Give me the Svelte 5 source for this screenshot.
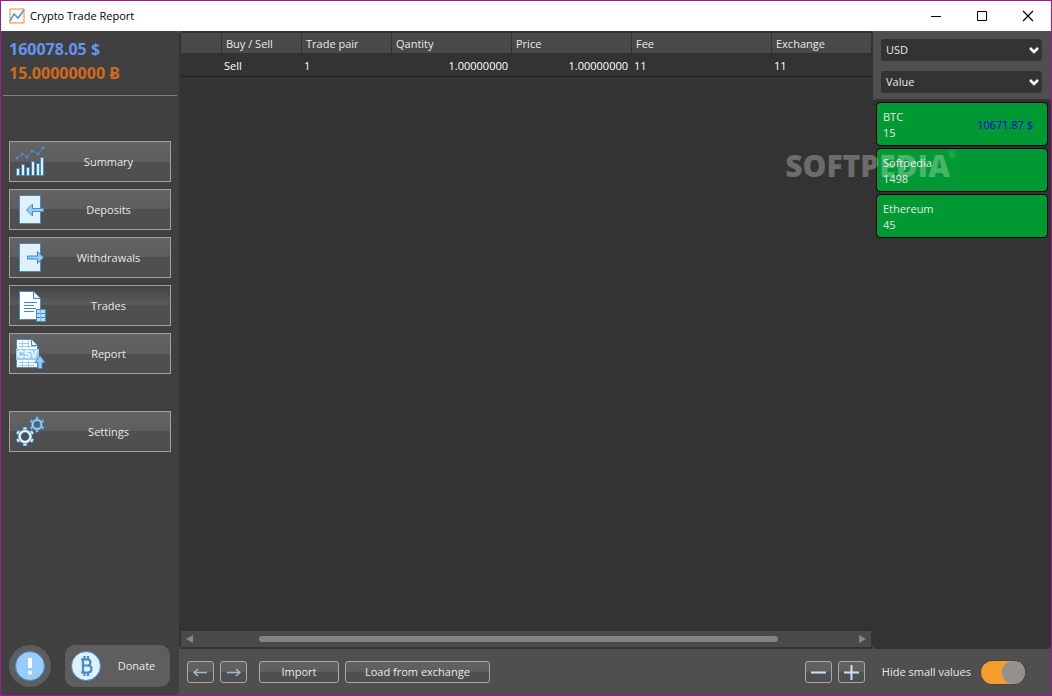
<script>
	let active = 'Trades'
	let currency = 'USD'
	let sort = 'Value'
	let hideSmall = true

	const nav = ['Summary', 'Deposits', 'Withdrawals', 'Trades', 'Report', 'Settings']

	const columns = [
		{ name: '', width: 41 },
		{ name: 'Buy / Sell', width: 80 },
		{ name: 'Trade pair', width: 90 },
		{ name: 'Qantity', width: 120, number: true },
		{ name: 'Price', width: 120, number: true },
		{ name: 'Fee', width: 140 },
		{ name: 'Exchange' }
	]

	const trades = [
		['', 'Sell', '1', '1.00000000', '1.00000000', '11', '11']
	]

	const assets = [
		{ name: 'BTC', amount: '15', value: '10671.87 $' },
		{ name: 'Softpedia', amount: '1498' },
		{ name: 'Ethereum', amount: '45' }
	]

	// horizontal scroll position, in percent of the track
	const scroll = { start: 9.3, size: 79.1 }

	const teeth = [0, 60, 120, 180, 240, 300]
</script>

<div class="window">
	<header class="titlebar">
		<svg class="logo" width="16" height="16" viewBox="0 0 16 16" fill="none">
			<rect x="1" y="1" width="14" height="14" fill="#fff7f0" stroke="#f08a48" />
			<path d="M1 13 5 6 9 10 15 2" stroke="#3c9bd6" stroke-width="1.5" />
		</svg>
		<h1>Crypto Trade Report</h1>
		<button type="button" aria-label="Minimize">
			<svg width="12" height="12" viewBox="0 0 12 12"><path d="M1 6.5h10" stroke="#000" /></svg>
		</button>
		<button type="button" aria-label="Maximize">
			<svg width="12" height="12" viewBox="0 0 12 12"><path d="M1.500 1.500h9v9h-9z" fill="none" stroke="#000" /></svg>
		</button>
		<button type="button" aria-label="Close">
			<svg width="12" height="12" viewBox="0 0 12 12"><path d="m1 1 10 10M11 1 1 11" stroke="#000" stroke-width="1.200" /></svg>
		</button>
	</header>

	<div class="body">
		<aside class="sidebar">
			<div class="totals">
				<p class="usd">160078.05 $</p>
				<p class="btc">15.00000000 Ƀ</p>
			</div>

			<nav>
				{#each nav as item}
					<button
						type="button"
						class:active={active === item}
						class:apart={item === 'Settings'}
						on:click={() => active = item}
					>
						<svg width="32" height="32" viewBox="0 0 32 32" fill="none" stroke="#4788c7">
							{#if item === 'Summary'}
								<path d="M2 12 7 8l5 3 5-6 6 3 5-6" />
								<g fill="#8bb7f0">
									<circle cx="2" cy="12" r="1" /><circle cx="7" cy="8" r="1" />
									<circle cx="12" cy="11" r="1" /><circle cx="17" cy="5" r="1" />
									<circle cx="23" cy="8" r="1" /><circle cx="28" cy="2" r="1" />
								</g>
								<path fill="#dff0fe" d="M1.500 22.500h3v7h-3zM6.500 18.500h3v11h-3zM11.500 21.500h3v8h-3zM16.500 15.500h3v14h-3zM21.500 17.500h3v12h-3zM25.500 11.500h3v18h-3z" />
							{:else if item === 'Deposits'}
								<path fill="#dff0fe" d="M4.500 1.500h21v28h-21z" />
								<path fill="#98ccfd" d="m11.500 16 6-6v4.500h11v3h-11v4.500z" />
							{:else if item === 'Withdrawals'}
								<path fill="#dff0fe" d="M4.500 1.500h21v28h-21z" />
								<path fill="#98ccfd" d="m28.500 15.500-6-6v4.500h-10v3h10v4.500z" />
							{:else if item === 'Trades'}
								<path fill="#fff" d="M4.500 1.500h14l7 7v21h-21z" />
								<path fill="#dff0fe" d="M18.500 1.500v7h7" />
								<path d="M9 12.500h13M9 15.500h10M9 18.500h12M9 21.500h10" />
								<path fill="#b6dcfe" stroke="#4788c7" d="M21.500 19.500h9v12h-9zM21.500 23.500h9M21.500 27.500h9" />
								<path stroke="#7fb5e8" d="M25.500 20v11" />
							{:else if item === 'Report'}
								<path fill="#fff" d="M1.500 1.500h15l6 6v22h-21z" />
								<path fill="#dff0fe" d="M16.500 1.500v6h6" />
								<path stroke="#98ccfd" d="M4 5.500h10M4 8.500h17M4 24.500h17M4 27.500h15M7.500 3v7M13.500 3v7M7.500 23v6M13.500 23v6" />
								<path fill="#98ccfd" stroke="none" d="M1 11h23v11H1z" />
								<text x="12" y="20" text-anchor="middle" class="csv">CSV</text>
								<path fill="#98ccfd" d="m25 17.500 5 7h-3v6h-4v-6h-3z" />
							{:else}
								<g transform="translate(10 20.500)" stroke="#e6f4ff">
									{#each teeth as angle}
										<path stroke-width="4.500" d="M0-5v-4.500" transform="rotate({angle})" stroke="#4788c7" />
										<path stroke-width="3" d="M0-5v-4" transform="rotate({angle})" />
									{/each}
									<circle r="5.500" stroke="#4788c7" stroke-width="3.500" />
									<circle r="5.500" stroke-width="2.200" />
								</g>
								<g transform="translate(22 8.500)" stroke="#a9d6ff">
									{#each teeth as angle}
										<path stroke-width="3.500" d="M0-4v-4" transform="rotate({angle})" stroke="#4788c7" />
										<path stroke-width="2" d="M0-4v-3" transform="rotate({angle})" />
									{/each}
									<circle r="4.500" stroke="#4788c7" stroke-width="3" />
									<circle r="4.500" stroke-width="1.500" />
								</g>
							{/if}
						</svg>
						<span>{item}</span>
					</button>
				{/each}
			</nav>

			<div class="support">
				<button type="button" class="about" aria-label="About">
					<svg width="30" height="30" viewBox="0 0 30 30">
						<circle cx="15" cy="15" r="14.500" fill="#98ccfd" stroke="#4788c7" />
						<path d="M13 7h4v10h-4z" fill="#fff" />
						<circle cx="15" cy="21.500" r="2" fill="#fff" />
					</svg>
				</button>
				<button type="button" class="donate">
					<svg width="30" height="30" viewBox="0 0 30 30" fill="none" stroke="#4788c7">
						<circle cx="15" cy="15" r="14.500" fill="#dff0fe" />
						<path stroke-width="2.200" d="M10 8.500h6.500q3 0 3 3t-3 3h-4.500 5q3.500 0 3.500 3.500t-3.500 3.500h-7M12 8.500v13M13.500 5v3M17 5v3M13.500 22v3M17 22v3" />
					</svg>
					<span>Donate</span>
				</button>
			</div>
		</aside>

		<div class="workspace">
			<div class="panels">
				<main>
					<table>
						<colgroup>
							{#each columns as column}
								<col style:width={column.width ? column.width + 'px' : 'auto'} />
							{/each}
						</colgroup>
						<thead>
							<tr>
								{#each columns as column}
									<th>{column.name}</th>
								{/each}
							</tr>
						</thead>
						<tbody>
							{#each trades as trade}
								<tr>
									{#each trade as value, i}
										<td class:number={columns[i].number}>{value}</td>
									{/each}
								</tr>
							{/each}
						</tbody>
					</table>

					<div class="scrollbar">
						<button type="button" aria-label="Scroll left">
							<svg width="7" height="8" viewBox="0 0 7 8"><path d="M7 0v8L0 4z" fill="#858585" /></svg>
						</button>
						<div class="track">
							<div class="thumb" style="margin-left: {scroll.start}%; width: {scroll.size}%"></div>
						</div>
						<button type="button" aria-label="Scroll right">
							<svg width="7" height="8" viewBox="0 0 7 8"><path d="M0 0v8l7-4z" fill="#858585" /></svg>
						</button>
					</div>
				</main>

				<aside class="portfolio">
					<div class="filters">
						<div class="select">
							<select aria-label="Currency" bind:value={currency}>
								<option>USD</option>
								<option>EUR</option>
							</select>
							<svg width="10" height="7" viewBox="0 0 10 7" fill="none"><path d="m1 1 4 4 4-4" stroke="#fff" stroke-width="2.500" /></svg>
						</div>
						<div class="select">
							<select aria-label="Sort by" bind:value={sort}>
								<option>Value</option>
								<option>Name</option>
							</select>
							<svg width="10" height="7" viewBox="0 0 10 7" fill="none"><path d="m1 1 4 4 4-4" stroke="#fff" stroke-width="2.500" /></svg>
						</div>
					</div>
					<ul>
						{#each assets as asset}
							<li>
								<div>
									<p>{asset.name}</p>
									<p>{asset.amount}</p>
								</div>
								{#if asset.value}
									<span class="value">{asset.value}</span>
								{/if}
							</li>
						{/each}
					</ul>
				</aside>
				<div class="watermark" aria-hidden="true">SOFTPEDIA<sup>®</sup></div>
			</div>

			<footer>
				<div class="group">
					<button type="button" class="square" aria-label="Undo">
						<svg width="15" height="9" viewBox="0 0 15 9" fill="none" stroke="#9fb8cc"><path stroke-width="1.500" d="M1 4.500h13M5 1 1 4.500 5 8" /></svg>
					</button>
					<button type="button" class="square" aria-label="Redo">
						<svg width="15" height="9" viewBox="0 0 15 9" fill="none" stroke="#9fb8cc"><path stroke-width="1.500" d="M1 4.500h13M10 1l4 3.500L10 8" /></svg>
					</button>
				</div>
				<div class="group grow">
					<button type="button">Import</button>
					<button type="button">Load from exchange</button>
				</div>
				<div class="group">
					<button type="button" class="square" aria-label="Remove">
						<svg width="15" height="15" viewBox="0 0 15 15"><path d="M0 7.500h15" stroke="#c6e3fb" stroke-width="2" /></svg>
					</button>
					<button type="button" class="square" aria-label="Add">
						<svg width="15" height="15" viewBox="0 0 15 15"><path d="M0 7.500h15M7.500 0v15" stroke="#c6e3fb" stroke-width="2" /></svg>
					</button>
				</div>
				<label class="toggle">
					Hide small values
					<input type="checkbox" bind:checked={hideSmall} />
				</label>
			</footer>
		</div>
	</div>
</div>

<style>
	:global(body) {
		background: #4f4f4f;
	}

	.window {
		display: flex;
		flex-direction: column;
		box-sizing: border-box;
		min-height: 100vh;
		border: 1px solid #9b1a8f;
		font: 11px/16px "Open Sans", "Noto Sans", sans-serif;
		color: #e8e8e8;
	}

	p, h1, ul {
		margin: 0;
		padding: 0;
	}

	button {
		display: flex;
		align-items: center;
		justify-content: center;
		box-sizing: border-box;
		margin: 0;
		padding: 0;
		border: none;
		background: none;
		color: inherit;
		font: inherit;
	}

	svg {
		display: block;
		flex: none;
	}

	.titlebar {
		display: flex;
		align-items: center;
		height: 30px;
		padding-left: 8px;
		background: #fff;
		color: #000;
	}
	.titlebar h1 {
		flex: 1;
		margin-left: 5px;
		font-size: 11px;
		font-weight: 400;
	}
	.titlebar button {
		width: 46px;
		height: 30px;
	}

	.body {
		display: flex;
		flex: 1;
	}

	.sidebar {
		display: flex;
		flex-direction: column;
		box-sizing: border-box;
		width: 178px;
		padding-bottom: 8px;
		border-radius: 4px;
		background: #404040;
	}

	.totals {
		margin: 0 2px;
		padding: 6px 6px 10px;
		border-bottom: 1px solid #7f7f7f;
		font-size: 16px;
		font-weight: 700;
		line-height: 24px;
	}
	.usd {
		color: #6495ed;
	}
	.btc {
		color: #d2691e;
	}

	nav {
		display: flex;
		flex-direction: column;
		gap: 7px;
		padding: 45px 8px 0;
	}
	nav button {
		height: 41px;
		padding-left: 5px;
		border: 1px solid #a0a0a0;
		background: linear-gradient(#636363, #5e5e5e 50%, #505050 50%, #4e4e4e);
	}
	nav button.active {
		background: linear-gradient(#444, #5c5c5c 50%, #505050 50%, #4e4e4e);
	}
	nav button.apart {
		margin-top: 30px;
	}
	nav span {
		flex: 1;
	}
	.csv {
		fill: #fff;
		stroke: none;
		font: bold 10px "Liberation Sans", sans-serif;
	}

	.support {
		display: flex;
		gap: 14px;
		margin-top: auto;
		padding: 0 9px 0 8px;
	}
	.support button {
		height: 42px;
		background: #5e5e5e;
	}
	.about {
		width: 42px;
		border-radius: 50%;
	}
	.support .donate {
		flex: 1;
		padding: 0 6px;
		border-radius: 10px;
	}
	.donate span {
		flex: 1;
		padding-left: 8px;
	}

	.workspace {
		display: flex;
		flex: 1;
		flex-direction: column;
		min-width: 0;
	}
	.panels {
		position: relative;
		display: flex;
		flex: 1;
	}

	main {
		display: flex;
		flex: 1;
		flex-direction: column;
		min-width: 0;
		padding: 2px;
		border-radius: 4px;
		background: #333;
	}

	table {
		width: 100%;
		border-collapse: separate;
		border-spacing: 0;
		table-layout: fixed;
	}
	th {
		padding: 2px 4px 0;
		border-right: 1px solid #333;
		background: #494949;
		font-weight: 400;
		line-height: 18px;
		text-align: left;
	}
	th:last-child {
		border-right: none;
	}
	td {
		padding: 5px 4px 2px 2px;
		border-bottom: 1px solid #1e1e1e;
		color: #fff;
		white-space: nowrap;
	}
	.number {
		text-align: right;
	}

	.scrollbar {
		display: flex;
		margin-top: auto;
		height: 16px;
		background: #494949;
	}
	.scrollbar button {
		width: 17px;
	}
	.track {
		display: flex;
		flex: 1;
		align-items: center;
	}
	.thumb {
		height: 6px;
		border-radius: 3px;
		background: #828282;
	}

	.portfolio {
		display: flex;
		flex-direction: column;
		width: 178px;
	}
	.filters {
		display: flex;
		flex-direction: column;
		gap: 10px;
		padding: 8px 9px 6px 8px;
	}
	.select {
		display: grid;
		align-items: center;
	}
	.select > * {
		grid-area: 1 / 1;
	}
	.select svg {
		justify-self: end;
		margin-right: 3px;
		pointer-events: none;
	}
	select {
		appearance: none;
		height: 22px;
		padding: 0 5px;
		border: none;
		border-radius: 3px;
		background: #333;
		color: #e8e8e8;
		font: inherit;
	}
	ul {
		display: flex;
		flex: 1;
		flex-direction: column;
		gap: 2px;
		padding: 3px;
		border-radius: 4px;
		background: #333;
		list-style: none;
	}
	li {
		display: flex;
		align-items: center;
		justify-content: space-between;
		padding: 6px 14px 4px 6px;
		border: 1px solid #000;
		border-radius: 4px;
		background: #009933;
	}
	.value {
		color: #0000e0;
	}

	.watermark {
		position: absolute;
		top: 112px;
		right: 101px;
		color: rgba(255, 255, 255, 0.28);
		font-size: 30px;
		font-weight: 800;
		line-height: 46px;
		pointer-events: none;
	}
	.watermark sup {
		position: absolute;
		top: 0;
		right: -6px;
		font-size: 10px;
		font-weight: 400;
		line-height: 24px;
	}

	footer {
		display: flex;
		align-items: center;
		gap: 12px;
		height: 46px;
		padding: 0 26px 0 8px;
	}
	.group {
		display: flex;
		gap: 6px;
	}
	.grow {
		flex: 1;
	}
	footer button {
		height: 22px;
		padding: 0 19px;
		border: 1px solid #a8a8a8;
		border-radius: 3px;
		background: linear-gradient(#626262, #5e5e5e 50%, #505050 50%, #4e4e4e);
	}
	.grow button {
		min-width: 80px;
	}
	footer .square {
		width: 27px;
		padding: 0;
	}

	.toggle {
		display: flex;
		align-items: center;
		gap: 10px;
		margin-left: 5px;
	}
	.toggle input {
		appearance: none;
		display: flex;
		width: 44px;
		height: 23px;
		margin: 0;
		border-radius: 12px;
		background: #333;
		box-shadow: 0 0 0 1px #454545;
	}
	.toggle input::before {
		content: "";
		width: 23px;
		border-radius: 50%;
		background: #919191;
	}
	.toggle input:checked {
		justify-content: flex-end;
		background: #f69c2d;
	}
</style>
